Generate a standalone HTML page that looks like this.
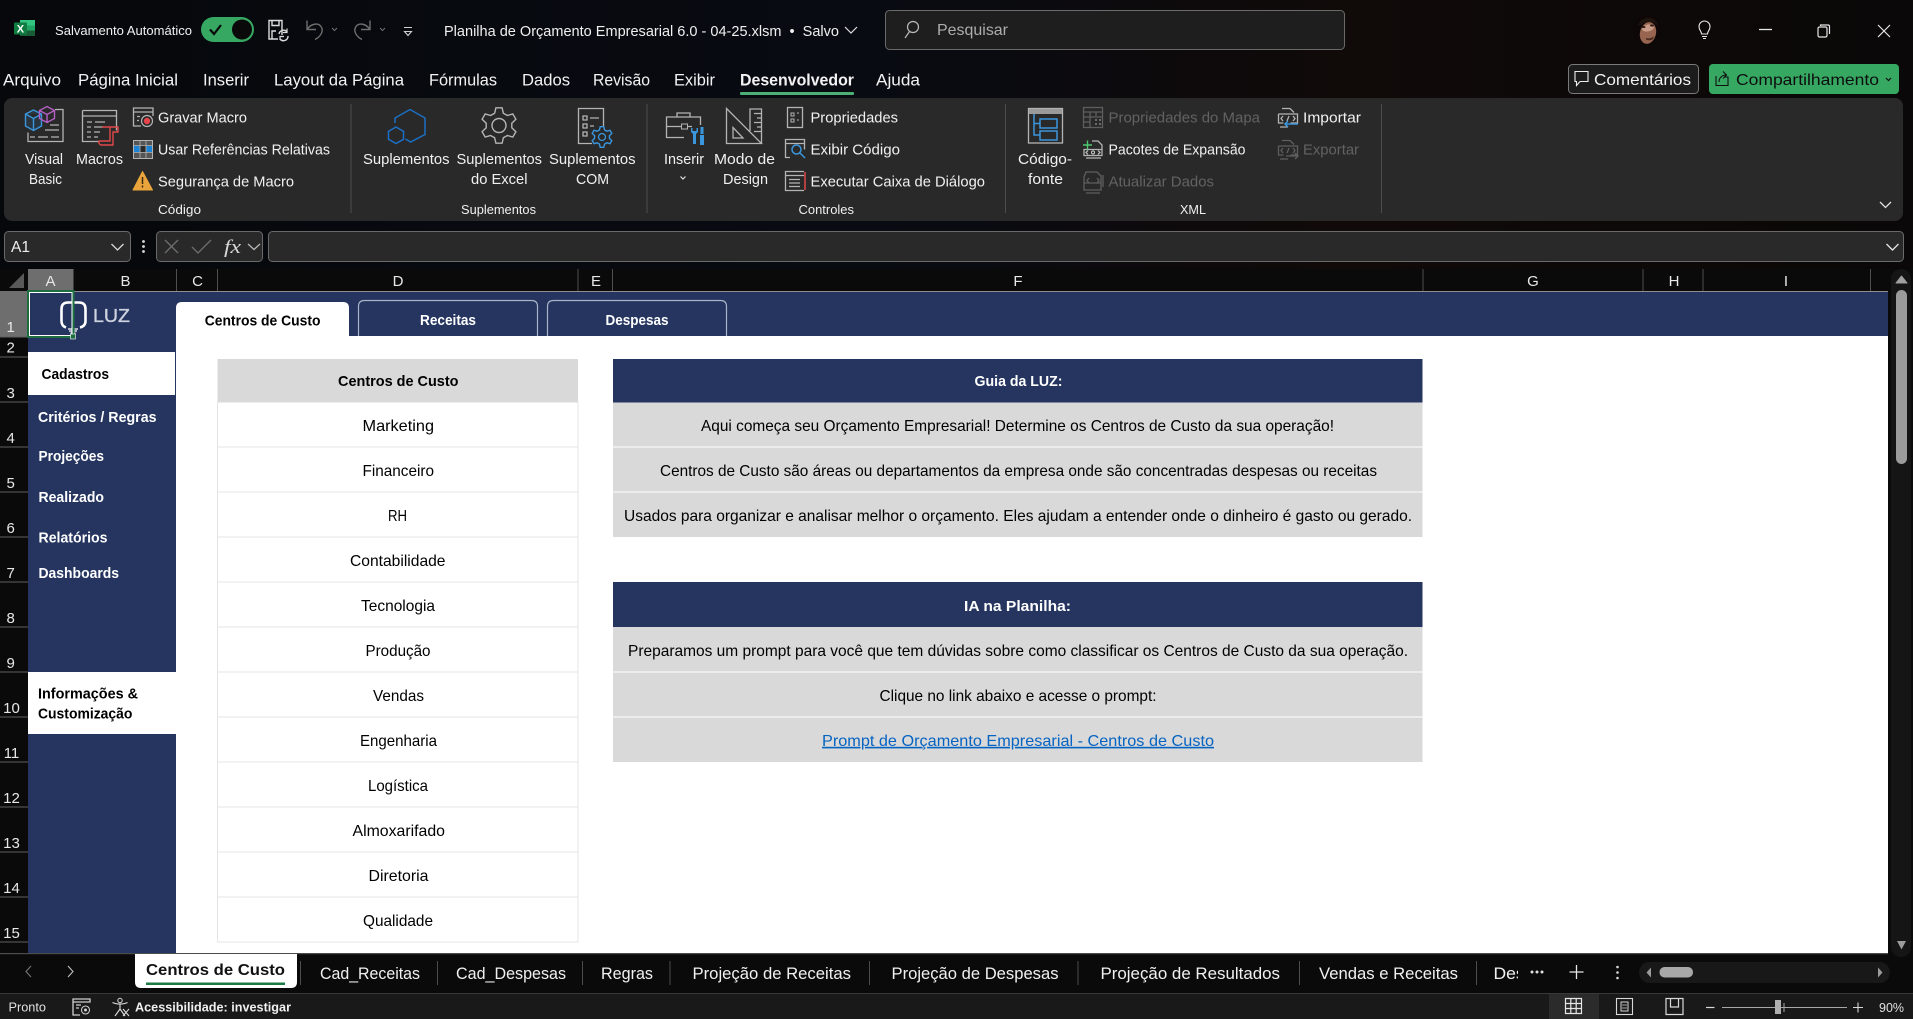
<!DOCTYPE html>
<html lang="pt-BR"><head><meta charset="utf-8"><title>Planilha de Orçamento Empresarial</title>
<style>
html,body{margin:0;padding:0;background:#0a0a0a;width:1913px;height:1019px;overflow:hidden}
svg{display:block;position:absolute;left:0;top:0}
text{font-family:"Liberation Sans",sans-serif;white-space:pre}
.u text{fill:#f0f0f0;font-size:14.5px}
.s text{fill:#000;font-size:16px}
.ic{fill:none;stroke:#b4b4b4;stroke-width:1.3}
.dis{fill:none;stroke:#5e5e5e;stroke-width:1.3}
.bl{fill:none;stroke:#3a96dd;stroke-width:1.5}
</style></head><body>
<svg width="1913" height="1019" viewBox="0 0 1913 1019" xmlns="http://www.w3.org/2000/svg">
<defs>
<linearGradient id="top" x1="0" x2="1" y1="0" y2="0"><stop offset="0" stop-color="#06080b"/><stop offset=".45" stop-color="#080b12"/><stop offset=".7" stop-color="#100a09"/><stop offset="1" stop-color="#0a0808"/></linearGradient>
<path id="gear" d="M-4.4-12.2L-3.1-17.7L3.1-17.7L4.4-12.2L8.4-10L13.8-11.6L16.9-6.2L12.8-2.3L12.8 2.3L16.9 6.2L13.8 11.6L8.4 10L4.4 12.2L3.1 17.7L-3.1 17.7L-4.4 12.2L-8.4 10L-13.8 11.6L-16.9 6.2L-12.8 2.3L-12.8-2.3L-16.9-6.2L-13.8-11.6L-8.4-10Z" vector-effect="non-scaling-stroke"/>
<clipPath id="av"><circle cx="1647" cy="30" r="15"/></clipPath>
<clipPath id="des"><rect x="1490" y="960" width="28" height="30"/></clipPath>
</defs>

<!-- chrome background -->
<rect width="1913" height="269" fill="url(#top)"/>
<rect y="269" width="1913" height="750" fill="#0a0a0a"/>

<!-- TITLE BAR -->
<rect x="20" y="20" width="15" height="16" rx="1.5" fill="#21a366"/>
<rect x="20" y="20" width="15" height="5.5" fill="#33c481"/>
<rect x="20" y="30.5" width="15" height="5.5" fill="#185c37"/>
<rect x="14" y="22.500" width="13" height="12" rx="1" fill="#107c41"/>
<text x="16.800" y="32.500" font-size="11" font-weight="bold" fill="#fff">X</text>
<text x="55" y="35" font-size="12.500" fill="#f0f0f0" textLength="137" lengthAdjust="spacingAndGlyphs">Salvamento Automático</text>
<text x="444" y="36" font-size="14.500" fill="#f0f0f0" textLength="395" lengthAdjust="spacingAndGlyphs">Planilha de Orçamento Empresarial 6.0 - 04-25.xlsm  •  Salvo</text>
<rect x="201" y="17" width="53" height="25" rx="12.5" fill="#36a862"/>
<circle cx="242" cy="29.5" r="10" fill="#0a0a0a"/>
<path d="M210 29.5l4 4.5 7-9" fill="none" stroke="#0a0a0a" stroke-width="2.2"/>
<path d="M845 27l6 6 6-6" fill="none" stroke="#e0e0e0" stroke-width="1.2"/>
<!-- save -->
<path d="M282 35V20.5H269V39H278M272 20.5v5h7v-5M272 39v-8h4" fill="none" stroke="#dcdcdc" stroke-width="1.4"/>
<path d="M279 34a4.5 4.5 0 0 1 8-2M288 36a4.5 4.5 0 0 1-8 3" fill="none" stroke="#dcdcdc" stroke-width="1.4"/>
<path d="M287 28.5v4h-4M280 40v-3.5h4" fill="none" stroke="#dcdcdc" stroke-width="1.2"/>
<!-- undo redo -->
<path d="M307 20.500v9h9M307 29.500c4-6 11-7 14-3 3 4 0 10-6 13" fill="none" stroke="#6e6e6e" stroke-width="1.4"/>
<path d="M332 28l2.500 2.500L337 28" fill="none" stroke="#6e6e6e" stroke-width="1.1"/>
<path d="M370 20.500v9h-9M370 29.500c-4-6-11-7-14-3-3 4 0 10 6 13" fill="none" stroke="#6e6e6e" stroke-width="1.4"/>
<path d="M380 28l2.500 2.500L385 28" fill="none" stroke="#6e6e6e" stroke-width="1.1"/>
<path d="M404 27.500h8M404.500 31.500h7l-3.500 4z" fill="none" stroke="#d0d0d0" stroke-width="1.1"/>
<!-- search -->
<rect x="885.500" y="10.500" width="459" height="39" rx="4" fill="#1e1e1e" stroke="#6a6a6a"/>
<circle cx="913" cy="27" r="5.500" fill="none" stroke="#bbb" stroke-width="1.2"/><path d="M909.500 31.500L905 38" stroke="#bbb" stroke-width="1.2"/>
<text x="937" y="35" font-size="16" fill="#adadad" textLength="71" lengthAdjust="spacingAndGlyphs">Pesquisar</text>
<!-- avatar -->
<circle cx="1647" cy="30" r="15" fill="#0d0807"/>
<g clip-path="url(#av)">
<path d="M1633 36c2 5 5 7 8 8l-1 3h-9z" fill="#e4e0dc"/>
<ellipse cx="1648" cy="33" rx="8" ry="11" fill="#96644f" transform="rotate(14 1648 33)"/>
<ellipse cx="1648" cy="28" rx="6" ry="3.500" fill="#c99a86" transform="rotate(-12 1648 28)"/>
<path d="M1638 26c1-6 7-9 13-8 4 1 6 4 7 8l-3-3c-5-2-11-1-14 2z" fill="#1f130d"/>
<ellipse cx="1643.500" cy="27" rx="2" ry="1" fill="#2e1a12"/><ellipse cx="1652" cy="25.500" rx="2" ry="1" fill="#2e1a12"/>
<path d="M1646 38c3 1 6 0 8-2l-1 3c-2 1.500-5 1.500-7 .5z" fill="#4a2a20"/>
</g>
<!-- bulb -->
<path d="M1701.500 34c0-3-2.500-3.500-2.500-7.500a5.500 5.500 0 0 1 11 0c0 4-2.500 4.500-2.500 7.500zM1702 36.500h5M1703 38.500h3" fill="none" stroke="#e6e6e6" stroke-width="1.1"/>
<!-- window -->
<path d="M1759 29.500h13" stroke="#e6e6e6" stroke-width="1.3"/>
<rect x="1818" y="27" width="9" height="10" rx="1.500" fill="none" stroke="#e6e6e6" stroke-width="1.2"/><path d="M1820.500 26v-1h7.500q1.500 0 1.500 1.500v7.500" fill="none" stroke="#e6e6e6" stroke-width="1.2"/>
<path d="M1878 25l12 12M1890 25l-12 12" stroke="#e6e6e6" stroke-width="1.2"/>

<!-- MENU -->
<g font-size="16.500" fill="#f2f2f2">
<text x="3" y="85.500" textLength="58" lengthAdjust="spacingAndGlyphs">Arquivo</text>
<text x="78" y="85.500" textLength="100" lengthAdjust="spacingAndGlyphs">Página Inicial</text>
<text x="203" y="85.500" textLength="46" lengthAdjust="spacingAndGlyphs">Inserir</text>
<text x="274" y="85.500" textLength="130" lengthAdjust="spacingAndGlyphs">Layout da Página</text>
<text x="429" y="85.500" textLength="68" lengthAdjust="spacingAndGlyphs">Fórmulas</text>
<text x="522" y="85.500" textLength="48" lengthAdjust="spacingAndGlyphs">Dados</text>
<text x="593" y="85.500" textLength="57" lengthAdjust="spacingAndGlyphs">Revisão</text>
<text x="674" y="85.500" textLength="41" lengthAdjust="spacingAndGlyphs">Exibir</text>
<text x="740" y="85.500" font-weight="bold" textLength="114" lengthAdjust="spacingAndGlyphs">Desenvolvedor</text>
<text x="876" y="85.500" textLength="44" lengthAdjust="spacingAndGlyphs">Ajuda</text>
</g>
<rect x="740" y="92" width="114" height="3" rx="1" fill="#4caf76"/>
<rect x="1568.500" y="64.500" width="130" height="29" rx="4" fill="#1c1c1c" stroke="#7a7a7a"/>
<path d="M1575 71.500h13v10h-8l-3.500 4v-4H1575z" fill="none" stroke="#eee" stroke-width="1.1"/>
<text x="1594" y="85" font-size="16" fill="#f2f2f2" textLength="97" lengthAdjust="spacingAndGlyphs">Comentários</text>
<rect x="1709" y="64" width="190" height="30" rx="4" fill="#36a862"/>
<path d="M1716 76v9.500h12V77h-4M1719 82c0-4 3-7 7-7M1723 71.500l3.500 3.500-3.500 3.500" fill="none" stroke="#111" stroke-width="1.1"/>
<text x="1736" y="85" font-size="16" fill="#0d0d0d" textLength="143" lengthAdjust="spacingAndGlyphs">Compartilhamento</text>
<path d="M1886 78l2.500 2.500 2.500-2.500" fill="none" stroke="#111" stroke-width="1.2"/>

<!-- RIBBON -->
<rect x="4" y="98" width="1899" height="123" rx="8" fill="#292929"/>
<g stroke="#4d4d4d"><path d="M351 104v109M647 104v109M1005.500 104v109M1381.500 104v109"/></g>
<g class="u">
<text x="25" y="164" textLength="38" lengthAdjust="spacingAndGlyphs">Visual</text>
<text x="29" y="184" textLength="33" lengthAdjust="spacingAndGlyphs">Basic</text>
<text x="76" y="164" textLength="47" lengthAdjust="spacingAndGlyphs">Macros</text>
<text x="158" y="122.500" textLength="89" lengthAdjust="spacingAndGlyphs">Gravar Macro</text>
<text x="158" y="154.500" textLength="172" lengthAdjust="spacingAndGlyphs">Usar Referências Relativas</text>
<text x="158" y="186.500" textLength="136" lengthAdjust="spacingAndGlyphs">Segurança de Macro</text>
<text x="158" y="214" style="font-size:13px" textLength="43" lengthAdjust="spacingAndGlyphs">Código</text>
<text x="363" y="164" textLength="86.500" lengthAdjust="spacingAndGlyphs">Suplementos</text>
<text x="456.500" y="164" textLength="85.500" lengthAdjust="spacingAndGlyphs">Suplementos</text>
<text x="471" y="184" textLength="56.500" lengthAdjust="spacingAndGlyphs">do Excel</text>
<text x="549" y="164" textLength="86.500" lengthAdjust="spacingAndGlyphs">Suplementos</text>
<text x="576" y="184" textLength="33" lengthAdjust="spacingAndGlyphs">COM</text>
<text x="461" y="214" style="font-size:13px" textLength="75" lengthAdjust="spacingAndGlyphs">Suplementos</text>
<text x="664" y="164" textLength="40" lengthAdjust="spacingAndGlyphs">Inserir</text>
<text x="714" y="164" textLength="61" lengthAdjust="spacingAndGlyphs">Modo de</text>
<text x="723" y="184" textLength="45" lengthAdjust="spacingAndGlyphs">Design</text>
<text x="810.500" y="122.500" textLength="87.500" lengthAdjust="spacingAndGlyphs">Propriedades</text>
<text x="810.500" y="154.500" textLength="89.500" lengthAdjust="spacingAndGlyphs">Exibir Código</text>
<text x="810.500" y="186.500" textLength="174.500" lengthAdjust="spacingAndGlyphs">Executar Caixa de Diálogo</text>
<text x="798.500" y="214" style="font-size:13px" textLength="55.500" lengthAdjust="spacingAndGlyphs">Controles</text>
<text x="1018" y="164" textLength="54" lengthAdjust="spacingAndGlyphs">Código-</text>
<text x="1028" y="184" textLength="35" lengthAdjust="spacingAndGlyphs">fonte</text>
<text x="1108.500" y="154.500" textLength="137" lengthAdjust="spacingAndGlyphs">Pacotes de Expansão</text>
<text x="1303" y="122.500" textLength="58" lengthAdjust="spacingAndGlyphs">Importar</text>
<text x="1180" y="214" style="font-size:13px" textLength="26" lengthAdjust="spacingAndGlyphs">XML</text>
</g>
<g font-size="14.500" fill="#626262">
<text x="1108.500" y="122.500" textLength="151.500" lengthAdjust="spacingAndGlyphs">Propriedades do Mapa</text>
<text x="1108.500" y="186.500" textLength="105.500" lengthAdjust="spacingAndGlyphs">Atualizar Dados</text>
<text x="1303" y="154.500" textLength="56" lengthAdjust="spacingAndGlyphs">Exportar</text>
</g>
<path d="M680.500 176.500l2.500 2.500 2.500-2.500" fill="none" stroke="#e0e0e0" stroke-width="1.2"/>
<path d="M1880 202l5.500 5.500 5.500-5.500" fill="none" stroke="#e0e0e0" stroke-width="1.3"/>

<!-- VB icon -->
<path class="ic" d="M55 109.500h8v32H28v-9M30 137h5M38 137h10M51 137h8M45 130h14M50 125h9" />
<path d="M33.500 110l8 4v12l-8 4.500-8-4.500v-12zM25.500 114l8 4.500 8-4.500M33.500 118.500v12" fill="#2b4f6e" fill-opacity=".35" stroke="#3a96dd" stroke-width="1.400"/>
<path d="M47 106.500l7.500 4v8l-7.500 4-7.500-4v-8zM39.500 110.500l7.500 4 7.500-4M47 114.500v8" fill="none" stroke="#b65fc8" stroke-width="1.400"/>
<!-- Macros -->
<path class="ic" d="M82.500 110.500h34v20M99 141.500H82.500v-31M82.500 116h34M87 122h5M95 122h10M87 127h4M94 127h10M87 132h4M94 132h6M87 137h4M94 137h4"/>
<path d="M102 127h16v5h-5v13h-12a3 3 0 0 1-2-4h11V127" fill="none" stroke="#e0484a" stroke-width="1.400"/>
<!-- Gravar -->
<path class="ic" d="M153 116v-8H133.500v18H141M133.500 112h19.500M137 116.500h3M137 120.500h2"/>
<circle cx="147" cy="121" r="5.500" fill="#292929" stroke="#b4b4b4" stroke-width="1.200"/><circle cx="147" cy="121" r="3.200" fill="#e8454a"/>
<!-- Usar -->
<rect x="133.500" y="140.500" width="19" height="18" fill="#555" stroke="#b4b4b4"/>
<rect x="134" y="146" width="5.500" height="6" fill="#1a83d6"/><rect x="140.500" y="146" width="5" height="6" fill="#2a2a2a"/><rect x="146.500" y="146" width="5.500" height="6" fill="#1a83d6"/>
<path d="M140 140.500v18M146 140.500v18M133.500 145.500h19M133.500 152.500h19" stroke="#b4b4b4" stroke-width=".8"/>
<!-- Warning -->
<path d="M142.500 171.500L152.500 190H133z" fill="#eaa43c" stroke="#eaa43c" stroke-linejoin="round"/>
<path d="M142.500 177v7M142.500 185.500v2" stroke="#3a2a10" stroke-width="1.500"/>
<!-- Suplementos -->
<path d="M410 109.500l15 8.500v16.500l-14.500 7.500-5-3M395 123v-5l15-8.500" fill="none" stroke="#1c6fc4" stroke-width="1.500"/>
<path d="M396 127l7.500 4.300v8L396 143.500l-7.500-4.200v-8z" fill="none" stroke="#1c6fc4" stroke-width="1.500"/>
<!-- Gear -->
<use href="#gear" transform="translate(499 125.500)" fill="none" stroke="#b4b4b4" stroke-width="1.400"/>
<circle cx="499" cy="125.500" r="7" fill="none" stroke="#b4b4b4" stroke-width="1.400"/>
<!-- COM -->
<path class="ic" d="M592 143.500h-13.500V108.500h25v18M583 116h4v4h-4zM590 118h9M583 124h4v4h-4zM590 126h4M583 132h4v4h-4z"/>
<use href="#gear" transform="translate(602 137) scale(.58)" fill="#292929" stroke="#3a96dd" stroke-width="1.400"/>
<circle cx="602" cy="137" r="3.500" fill="none" stroke="#3a96dd" stroke-width="1.300"/>
<!-- Inserir -->
<path class="ic" d="M684 137.500h-17.500v-20.500h34v8M666.500 126.500h15M688 126.500h4M677 117v-4h13v4"/>
<rect x="681.500" y="124" width="6" height="5" fill="none" stroke="#b4b4b4"/>
<path d="M691 128v4l2 2v10h3v-10l2-2v-4l-1.500 0v3h-4v-3z" fill="#3a96dd"/>
<rect x="700.500" y="127" width="3" height="7" fill="#3a96dd"/><rect x="700" y="135" width="4" height="10" fill="#3a96dd"/>
<!-- Modo de design -->
<path class="ic" d="M726.500 108.500L761.500 143.500H726.500zM733 127.500L743 138H733zM761.500 143.500V109H750V131M754 113.500h7M757 118h4M754 122.500h7M757 127h4M754 131.500h7"/>
<!-- Propriedades -->
<rect class="ic" x="787.500" y="107.500" width="15" height="20"/><path d="M791 113h3v3h-3zM797 113h2M791 119h3v3h-3zM797 120h2" stroke="#b4b4b4" fill="none"/>
<!-- Exibir -->
<path class="ic" d="M790 157.500h-4.500v-18h19v10M785.500 143.500h19"/>
<circle cx="796.500" cy="149.500" r="4.500" class="bl"/><path class="bl" d="M800 153l5 5"/>
<!-- Executar -->
<path class="ic" d="M804 171.500H785.500v19H804M785.500 175.500H804M789 179.500h11M789 183h11M789 186.500h11"/>
<path d="M805 172v18" stroke="#e0484a" stroke-width="1.500"/>
<!-- Código-fonte -->
<rect x="1028.500" y="108.500" width="34" height="34.500" fill="none" stroke="#b4b4b4" stroke-width="1.300"/><rect x="1029" y="109" width="33" height="5" fill="#9a9a9a"/>
<rect x="1040" y="119" width="17" height="9" class="bl"/><rect x="1040" y="131" width="17" height="9" class="bl"/>
<path class="bl" d="M1034 114v21h6M1034 123.500h6"/>
<!-- Mapa -->
<rect class="dis" x="1083.500" y="107.500" width="19" height="20"/><path class="dis" d="M1083.500 112h19M1090 112v15M1096 112v4M1083.500 117h19M1083.500 122h6"/><path d="M1095 119h2v2h-2zM1099 119h2v2h-2zM1095 123h2v2h-2zM1099 123h2v2h-2z" fill="#6a6a6a"/>
<!-- Pacotes -->
<path class="ic" d="M1092 141h6l4 4v4M1084 149.500h18v6h-18zM1086 158h15"/><path class="ic" d="M1088 150.500l-2 2 2 2M1098 150.500l2 2-2 2"/>
<circle cx="1093" cy="152.500" r="1.500" fill="none" stroke="#ccc"/>
<path d="M1083 145h9M1087.500 140.500v9" stroke="#4ec96f" stroke-width="1.400"/>
<!-- Atualizar -->
<path class="dis" d="M1086 172h11l4 4v14h-17v-13zM1084 183h17M1086 193h14M1103 175v12"/>
<path class="dis" d="M1089 178l-2 2.500 2 2.500M1097 178l2 2.500-2 2.500"/>
<!-- Importar -->
<path class="ic" d="M1282 108.500h8l4 4M1278.500 114h19v9h-7M1278.500 114v9h5M1280 127h8"/><path class="ic" d="M1283 116l-2 2.500 2 2.500M1293 116l2 2.500-2 2.500M1287 121l2-5"/>
<path class="bl" d="M1298 124h-13M1288 121l-3 3 3 3"/>
<!-- Exportar -->
<path class="dis" d="M1282 140.500h8l4 4M1278.500 146h19v9h-7M1278.500 146v9h5M1280 159h8M1283 148l-2 2.500 2 2.500M1293 148l2 2.500-2 2.500M1287 153l2-5M1286 156h12M1295 153l3 3-3 3"/>

<!-- FORMULA BAR -->
<rect x="4.500" y="231.500" width="126" height="30" rx="4" fill="#292929" stroke="#6a6a6a"/>
<text x="11" y="252" font-size="16" fill="#eee" textLength="19" lengthAdjust="spacingAndGlyphs">A1</text>
<path d="M111.500 244l6 6 6-6" fill="none" stroke="#d8d8d8" stroke-width="1.300"/>
<circle cx="143.500" cy="241.500" r="1.400" fill="#ddd"/><circle cx="143.500" cy="246.500" r="1.400" fill="#ddd"/><circle cx="143.500" cy="251.500" r="1.400" fill="#ddd"/>
<rect x="156.500" y="231.500" width="106" height="30" rx="4" fill="#292929" stroke="#6a6a6a"/>
<path d="M165 240l13 13M178 240l-13 13" stroke="#6e6e6e" stroke-width="1.300"/>
<path d="M192 247l6 6 13-13" fill="none" stroke="#6e6e6e" stroke-width="1.300"/>
<text x="224" y="253" style="font-family:'Liberation Serif',serif;font-style:italic" font-size="19" fill="#d8d8d8" textLength="17" lengthAdjust="spacingAndGlyphs">fx</text>
<path d="M248 244l6 5.500 6-5.500" fill="none" stroke="#bcbcbc" stroke-width="1.200"/>
<rect x="268.500" y="231.500" width="1635" height="30" rx="4" fill="#292929" stroke="#6a6a6a"/>
<path d="M1886.500 244l6 6 6-6" fill="none" stroke="#e0e0e0" stroke-width="1.400"/>

<!-- COLUMN HEADERS -->
<path d="M24 273v15H9z" fill="#595959"/>
<rect x="28" y="269" width="45.500" height="22" fill="#6e6e6e"/>
<g stroke="#4f4f4f"><path d="M176.500 269v22M217.500 269v22M578 269v22M612.500 269v22M1423 269v22M1643 269v22M1703 269v22M1870.500 269v22"/></g>
<rect x="28" y="291" width="1860" height="1.200" fill="#8e8e8e"/>
<g font-size="15" fill="#e8e8e8" text-anchor="middle">
<text x="50.500" y="286">A</text><text x="125.500" y="286">B</text><text x="197.500" y="286">C</text><text x="398" y="286">D</text><text x="596" y="286">E</text><text x="1018" y="286">F</text><text x="1533" y="286">G</text><text x="1674" y="286">H</text><text x="1786" y="286">I</text>
</g>

<!-- ROW HEADERS -->
<rect x="0" y="291" width="28" height="45.500" fill="#6e6e6e"/>
<g stroke="#606060"><path d="M0 337h28M0 357h28M0 402h28M0 447h28M0 492h28M0 537h28M0 582h28M0 627h28M0 672h28M0 717h28M0 762h28M0 807h28M0 852h28M0 897h28M0 942h28"/></g>
<g font-size="15" fill="#e8e8e8" text-anchor="middle">
<text x="10.700" y="332">1</text><text x="10.700" y="352.500">2</text><text x="10.700" y="398">3</text><text x="10.700" y="443">4</text><text x="10.700" y="488">5</text><text x="10.700" y="533">6</text><text x="10.700" y="578">7</text><text x="10.700" y="623">8</text><text x="10.700" y="668">9</text><text x="11.500" y="713">10</text><text x="11.500" y="758">11</text><text x="11.500" y="803">12</text><text x="11.500" y="848">13</text><text x="11.500" y="893">14</text><text x="11.500" y="938">15</text>
</g>

<!-- SHEET -->
<rect x="28" y="292" width="1860" height="661" fill="#fff"/>
<rect x="28" y="292" width="1860" height="44" fill="#253560"/>
<rect x="28" y="292" width="148" height="661" fill="#253560"/>
<rect x="28" y="352" width="147" height="43" fill="#fff"/>
<rect x="28" y="672" width="148" height="62" fill="#fff"/>

<!-- Logo -->
<path d="M68 302.500h11q6.500 0 6.500 6.500v12q0 5-5.500 6.500M66 327.500q-4.500-1.500-4.500-6.500v-12q0-6.500 6.500-6.500" fill="none" stroke="#fff" stroke-width="2.600"/>
<path d="M68 329h10M69 331h8M70.500 333h5" stroke="#fff" stroke-width="1.300"/>
<text x="93" y="322" font-size="18" fill="#cdd3df" stroke="#cdd3df" stroke-width=".35" textLength="37" lengthAdjust="spacingAndGlyphs">LUZ</text>

<!-- Selection -->
<rect x="28" y="291" width="45.500" height="46" fill="none" stroke="#1d6f42" stroke-width="2"/>
<rect x="29.500" y="292.500" width="42.500" height="43" fill="none" stroke="#fff" stroke-width="1"/>
<rect x="70.500" y="334" width="5" height="5" fill="#1d6f42" stroke="#fff" stroke-width=".6"/>

<!-- Sidebar -->
<g font-size="15" font-weight="bold">
<text x="41.500" y="379" fill="#000" textLength="67.500" lengthAdjust="spacingAndGlyphs">Cadastros</text>
<g fill="#fff">
<text x="38" y="421.800" textLength="118.500" lengthAdjust="spacingAndGlyphs">Critérios / Regras</text>
<text x="38.500" y="461" textLength="65.500" lengthAdjust="spacingAndGlyphs">Projeções</text>
<text x="38.500" y="502" textLength="65.500" lengthAdjust="spacingAndGlyphs">Realizado</text>
<text x="38.500" y="542.700" textLength="69" lengthAdjust="spacingAndGlyphs">Relatórios</text>
<text x="38.500" y="578" textLength="80.500" lengthAdjust="spacingAndGlyphs">Dashboards</text>
</g>
<text x="38" y="698.700" fill="#000" textLength="100" lengthAdjust="spacingAndGlyphs">Informações &amp;</text>
<text x="38" y="718.700" fill="#000" textLength="94.400" lengthAdjust="spacingAndGlyphs">Customização</text>
</g>

<!-- Sheet tabs -->
<path d="M176 336v-28q0-6 6-6h161q6 0 6 6v28z" fill="#fff"/>
<path d="M358.500 336v-29.500q0-6 6-6h167q6 0 6 6V336M547.500 336v-29.500q0-6 6-6h167q6 0 6 6V336" fill="#253560" stroke="#aab3c8" stroke-width="1.200"/>
<g font-size="15" font-weight="bold">
<text x="204.700" y="325.500" fill="#000" textLength="115.800" lengthAdjust="spacingAndGlyphs">Centros de Custo</text>
<text x="420" y="325" fill="#fff" textLength="56" lengthAdjust="spacingAndGlyphs">Receitas</text>
<text x="605.500" y="325" fill="#fff" textLength="63" lengthAdjust="spacingAndGlyphs">Despesas</text>
</g>

<!-- Table -->
<rect x="217.500" y="359" width="360.500" height="43.500" fill="#d9d9d9"/>
<g stroke="#e4e4e4"><path d="M217.500 402v540.500M578 402v540.500M217.500 447h360.500M217.500 492h360.500M217.500 537h360.500M217.500 582h360.500M217.500 627h360.500M217.500 672h360.500M217.500 717h360.500M217.500 762h360.500M217.500 807h360.500M217.500 852h360.500M217.500 897h360.500M217.500 942h360.500"/></g>
<text x="338" y="386" font-size="15" font-weight="bold" fill="#000" textLength="120.500" lengthAdjust="spacingAndGlyphs">Centros de Custo</text>
<g class="s">
<text x="362.500" y="430.800" textLength="71.500" lengthAdjust="spacingAndGlyphs">Marketing</text>
<text x="362.500" y="475.800" textLength="71.500" lengthAdjust="spacingAndGlyphs">Financeiro</text>
<text x="388" y="520.800" textLength="19" lengthAdjust="spacingAndGlyphs">RH</text>
<text x="350" y="565.800" textLength="95.500" lengthAdjust="spacingAndGlyphs">Contabilidade</text>
<text x="361" y="610.800" textLength="74" lengthAdjust="spacingAndGlyphs">Tecnologia</text>
<text x="365.500" y="655.800" textLength="65" lengthAdjust="spacingAndGlyphs">Produção</text>
<text x="373" y="700.800" textLength="51" lengthAdjust="spacingAndGlyphs">Vendas</text>
<text x="360" y="745.800" textLength="77" lengthAdjust="spacingAndGlyphs">Engenharia</text>
<text x="368" y="790.800" textLength="60" lengthAdjust="spacingAndGlyphs">Logística</text>
<text x="352.500" y="835.800" textLength="92.500" lengthAdjust="spacingAndGlyphs">Almoxarifado</text>
<text x="368.500" y="880.800" textLength="60" lengthAdjust="spacingAndGlyphs">Diretoria</text>
<text x="363" y="925.800" textLength="70" lengthAdjust="spacingAndGlyphs">Qualidade</text>
</g>

<!-- Guia -->
<rect x="613" y="359" width="809.500" height="43.500" fill="#253560"/>
<rect x="613" y="402.500" width="809.500" height="134.500" fill="#d9d9d9"/>
<path d="M613 447h809.500M613 492h809.500" stroke="#fff"/>
<text x="974.500" y="386" font-size="15" font-weight="bold" fill="#fff" textLength="88" lengthAdjust="spacingAndGlyphs">Guia da LUZ:</text>
<g class="s">
<text x="701" y="430.800" textLength="633" lengthAdjust="spacingAndGlyphs">Aqui começa seu Orçamento Empresarial! Determine os Centros de Custo da sua operação!</text>
<text x="660" y="475.800" textLength="717" lengthAdjust="spacingAndGlyphs">Centros de Custo são áreas ou departamentos da empresa onde são concentradas despesas ou receitas</text>
<text x="624" y="520.800" textLength="788" lengthAdjust="spacingAndGlyphs">Usados para organizar e analisar melhor o orçamento. Eles ajudam a entender onde o dinheiro é gasto ou gerado.</text>
</g>
<!-- IA -->
<rect x="613" y="582" width="809.500" height="45" fill="#253560"/>
<rect x="613" y="627" width="809.500" height="135" fill="#d9d9d9"/>
<path d="M613 672h809.500M613 717h809.500" stroke="#fff"/>
<text x="964" y="611" font-size="15" font-weight="bold" fill="#fff" textLength="107" lengthAdjust="spacingAndGlyphs">IA na Planilha:</text>
<g class="s">
<text x="628" y="655.800" textLength="780" lengthAdjust="spacingAndGlyphs">Preparamos um prompt para você que tem dúvidas sobre como classificar os Centros de Custo da sua operação.</text>
<text x="879.500" y="700.800" textLength="277" lengthAdjust="spacingAndGlyphs">Clique no link abaixo e acesse o prompt:</text>
<text x="822" y="745.800" style="fill:#0563c1" text-decoration="underline" textLength="392" lengthAdjust="spacingAndGlyphs">Prompt de Orçamento Empresarial - Centros de Custo</text>
</g>

<!-- VERTICAL SCROLLBAR -->
<rect x="1891" y="269" width="20" height="688" rx="10" fill="#151515"/>
<path d="M1901.500 276l5.500 7h-11z" fill="#a0a0a0" stroke="#a0a0a0" stroke-linejoin="round"/>
<rect x="1896" y="290" width="11" height="174" rx="5.500" fill="#9c9c9c"/>
<path d="M1897 941h9l-4.500 8.500z" fill="#9c9c9c"/>

<!-- SHEET TAB BAR -->
<rect x="0" y="953" width="1888" height="1.200" fill="#4c4c4c"/>
<path d="M31 966l-5 5.500 5 5.500" fill="none" stroke="#777" stroke-width="1.100"/>
<path d="M68 966l5 5.500-5 5.500" fill="none" stroke="#c0c0c0" stroke-width="1.100"/>
<path d="M135 954h162v28q0 6-6 6H141q-6 0-6-6z" fill="#fff"/>
<text x="146" y="975" font-size="16" font-weight="bold" fill="#111" textLength="139" lengthAdjust="spacingAndGlyphs">Centros de Custo</text>
<rect x="146" y="982.500" width="139" height="2.500" fill="#1d7a45"/>
<g font-size="16.500" fill="#f0f0f0">
<text x="320" y="979" textLength="100" lengthAdjust="spacingAndGlyphs">Cad_Receitas</text>
<text x="456" y="979" textLength="110" lengthAdjust="spacingAndGlyphs">Cad_Despesas</text>
<text x="601" y="979" textLength="52" lengthAdjust="spacingAndGlyphs">Regras</text>
<text x="692.500" y="979" textLength="158.500" lengthAdjust="spacingAndGlyphs">Projeção de Receitas</text>
<text x="891.500" y="979" textLength="167" lengthAdjust="spacingAndGlyphs">Projeção de Despesas</text>
<text x="1100.500" y="979" textLength="179.500" lengthAdjust="spacingAndGlyphs">Projeção de Resultados</text>
<text x="1319" y="979" textLength="139" lengthAdjust="spacingAndGlyphs">Vendas e Receitas</text>
<text x="1493.500" y="979" clip-path="url(#des)" textLength="78" lengthAdjust="spacingAndGlyphs">Despesas</text>
</g>
<g stroke="#4c4c4c"><path d="M300.500 961v24M437.500 961v24M582.500 961v24M670 961v24M869.500 961v24M1078 961v24M1299.500 961v24M1476.500 961v24"/></g>
<g fill="#e0e0e0"><circle cx="1532" cy="972" r="1.500"/><circle cx="1537" cy="972" r="1.500"/><circle cx="1542" cy="972" r="1.500"/></g>
<path d="M1576.500 965v14M1569.500 972h14" stroke="#e6e6e6" stroke-width="1.300"/>
<g fill="#d8d8d8"><circle cx="1617.500" cy="967" r="1.300"/><circle cx="1617.500" cy="972.500" r="1.300"/><circle cx="1617.500" cy="978" r="1.300"/></g>
<rect x="1639" y="962" width="251" height="21" rx="10.500" fill="#181818"/>
<path d="M1651 967.500v10l-4.500-5z" fill="#9c9c9c"/>
<rect x="1659.500" y="967" width="33.500" height="10.500" rx="5" fill="#a8a8a8"/>
<path d="M1878 967.500v10l4.500-5z" fill="#9c9c9c"/>

<!-- STATUS BAR -->
<rect x="0" y="993" width="1913" height="26" fill="#191919"/>
<rect x="0" y="993" width="1913" height="1" fill="#383838"/>
<text x="8.500" y="1011.500" font-size="12.500" fill="#e0e0e0" textLength="37.500" lengthAdjust="spacingAndGlyphs">Pronto</text>
<path class="ic" d="M73 999h17v3H73zM73 1002v13h7M76 1005h5M76 1008h3" style="stroke:#cfcfcf"/>
<circle cx="85.500" cy="1010" r="4" fill="none" stroke="#cfcfcf" stroke-width="1.100"/><circle cx="85.500" cy="1010" r="1.500" fill="#cfcfcf"/>
<circle cx="120" cy="1000.500" r="2.200" fill="none" stroke="#dcdcdc"/>
<path d="M112.500 1002.500c4 2 11 2 15 0M120 1004v5M120 1009l-5 7M120 1009l5 7M123 1009l6 7M129 1009l-6 7" fill="none" stroke="#dcdcdc" stroke-width="1.100"/>
<text x="135" y="1011.500" font-size="13" font-weight="bold" fill="#f0f0f0" textLength="156" lengthAdjust="spacingAndGlyphs">Acessibilidade: investigar</text>
<rect x="1549" y="994" width="50" height="25" fill="#2b2b2b"/>
<path d="M1565.500 998.500h16v15h-16zM1565.500 1003.500h16M1565.500 1008.500h16M1570.800 998.500v15M1576.200 998.500v15" fill="none" stroke="#e6e6e6" stroke-width="1.200"/>
<rect x="1616.500" y="998.500" width="16" height="16" fill="none" stroke="#d8d8d8" stroke-width="1.100"/><rect x="1621" y="1002" width="7" height="9" fill="none" stroke="#d8d8d8"/><path d="M1622 1005h5M1622 1008h5" stroke="#d8d8d8" stroke-width=".8"/>
<path d="M1666 998.500h17v16h-17zM1670.500 998.500v8.500h8v-8.500" fill="none" stroke="#d8d8d8" stroke-width="1.200"/>
<path d="M1706 1007.500h8.500" stroke="#d8d8d8" stroke-width="1.200"/>
<path d="M1722 1007.500h125M1784 1003v9" stroke="#a8a8a8" stroke-width="1"/>
<rect x="1775" y="1000" width="6" height="14" fill="#b0b0b0"/>
<path d="M1853 1007.500h10M1858 1002.500v10" stroke="#d8d8d8" stroke-width="1.100"/>
<text x="1879" y="1012" font-size="13" fill="#e0e0e0" textLength="25" lengthAdjust="spacingAndGlyphs">90%</text>
</svg>
</body></html>
